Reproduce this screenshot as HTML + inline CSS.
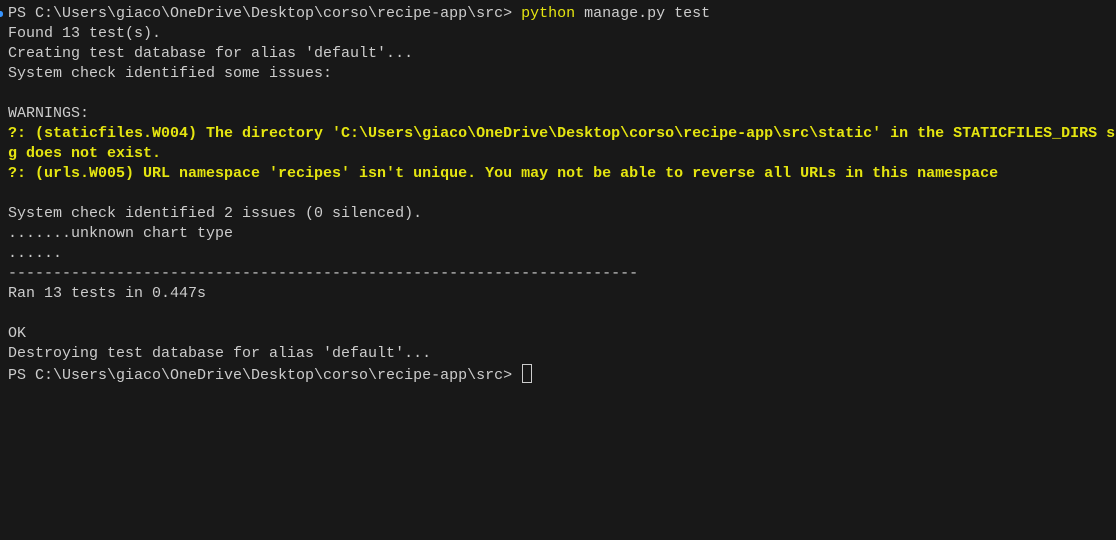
<!DOCTYPE html>
<html><head><meta charset="utf-8"><style>
html,body{margin:0;padding:0;background:#181818;width:1116px;height:540px;overflow:hidden}
pre{margin:0;position:absolute;left:8px;top:4px;font-family:"Liberation Mono",monospace;font-size:15px;line-height:20px;color:#cccccc;white-space:pre}
.y{color:#e5e510;font-weight:bold}
.p{color:#e5e510}
.cur{display:inline-block;width:8px;height:17px;border:1px solid #cccccc;vertical-align:-4px;margin-left:1px}
.dot{position:absolute;left:-2px;top:11px;width:5px;height:6px;border-radius:3px;background:#3794ff}
.top{position:absolute;left:8px;top:-16px;font-family:"Liberation Mono",monospace;font-size:15px;line-height:20px;color:#cccccc}
</style></head><body>
<div class="top">  ,  ,</div>
<div class="dot"></div>
<pre>PS C:\Users\giaco\OneDrive\Desktop\corso\recipe-app\src&gt; <span class="p">python</span> manage.py test
Found 13 test(s).
Creating test database for alias 'default'...
System check identified some issues:

WARNINGS:
<span class="y">?: (staticfiles.W004) The directory 'C:\Users\giaco\OneDrive\Desktop\corso\recipe-app\src\static' in the STATICFILES_DIRS s</span>
<span class="y">g does not exist.</span>
<span class="y">?: (urls.W005) URL namespace 'recipes' isn't unique. You may not be able to reverse all URLs in this namespace</span>

System check identified 2 issues (0 silenced).
.......unknown chart type
......
----------------------------------------------------------------------
Ran 13 tests in 0.447s

OK
Destroying test database for alias 'default'...
PS C:\Users\giaco\OneDrive\Desktop\corso\recipe-app\src&gt; <span class="cur"></span></pre>
</body></html>
